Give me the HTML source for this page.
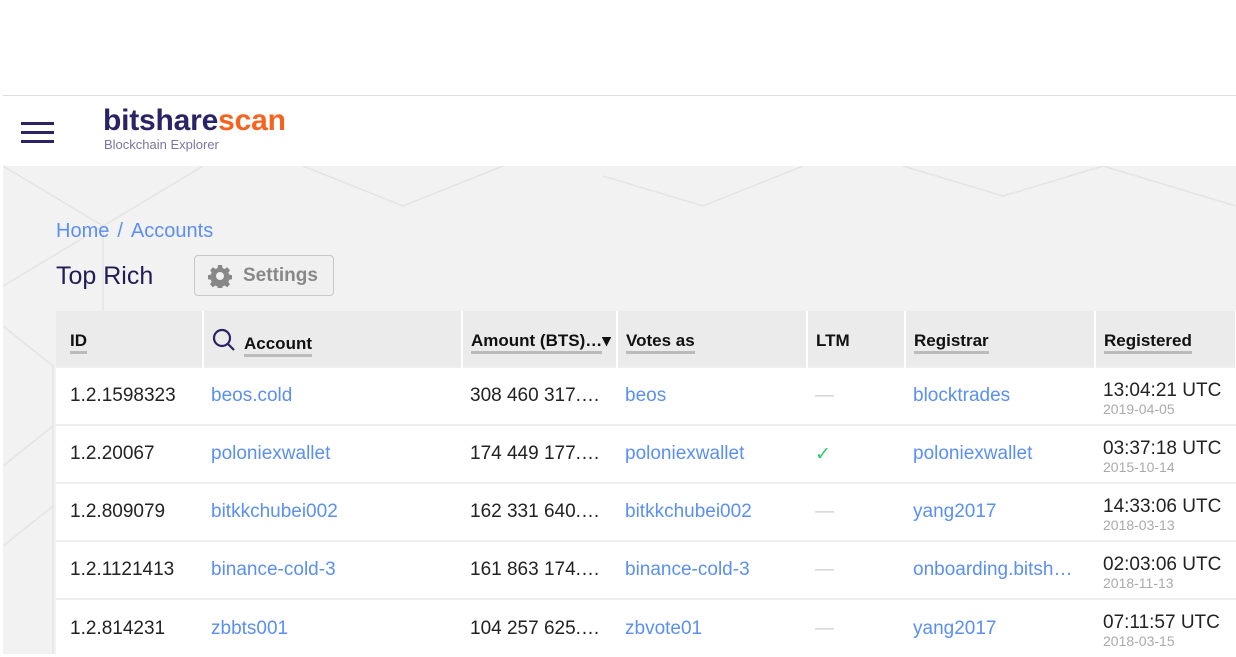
<!DOCTYPE html>
<html><head><meta charset="utf-8"><style>
*{margin:0;padding:0;box-sizing:border-box}
body{width:1236px;height:654px;overflow:hidden;background:#fff;font-family:"Liberation Sans",sans-serif;position:relative}
.topline{position:absolute;left:3px;right:0;top:95px;height:1px;background:#ddd}
.hdr{position:absolute;left:3px;right:0;top:96px;height:70px;background:#fff}
.ham{position:absolute;left:21px;top:122px;width:33px}
.ham i{display:block;height:3px;background:#2a2466;margin-bottom:6px}
.logo{position:absolute;left:103px;top:104px;font-size:30px;font-weight:bold;color:#2a2466;letter-spacing:-0.2px}
.logo span{color:#f7631e}
.sub{position:absolute;left:104px;top:137px;font-size:13px;color:#7a76a0}
.bg{position:absolute;left:3px;right:0;top:166px;bottom:0;background:#f2f2f2}
.crumb{position:absolute;left:56px;top:220px;font-size:20px;color:#5b8ff0}
.crumb b{font-weight:normal;color:#5b8ff0;margin:0 8px}
h1{position:absolute;left:56px;top:262px;font-size:25px;font-weight:normal;color:#231d55}
.btn{position:absolute;left:194px;top:255px;width:140px;height:41px;border:1px solid #c8c8c8;border-radius:4px;background:#f0f0f0;color:#888;font-size:19px;font-weight:bold;padding:9px 0 0 48px}
.btn svg{position:absolute;left:13px;top:8px}
table{position:absolute;left:56px;top:311px;width:1180px;border-collapse:collapse;font-size:19px;table-layout:fixed}
th{background:#ebebeb;height:56px;text-align:left;padding:4px 0 0 14px;font-size:17px;color:#111;border-right:2px solid #fff;white-space:nowrap;overflow:hidden}
th:first-child{padding-left:14px}
th u{text-decoration:none;border-bottom:3px solid #bbb;padding-bottom:1px}
td{background:#fff;height:58px;padding:0 0 0 14px;border-top:2px solid #eee;white-space:nowrap;color:#222;overflow:hidden;text-overflow:ellipsis}
td:nth-child(2),th:nth-child(2){padding-left:8px}
td a{color:#5b8ff0}
.d{color:#ccc}
.t{line-height:22px;padding-top:4px;padding-left:8px}
th:last-child{padding-left:8px}
.t small{display:block;font-size:14px;color:#aaa;line-height:15px}
</style></head><body>
<div class="topline"></div>
<div class="hdr"></div>
<div class="ham"><i></i><i></i><i></i></div>
<div class="logo">bitshare<span>scan</span></div>
<div class="sub">Blockchain Explorer</div>
<div class="bg">
<svg width="1233" height="488" style="position:absolute;left:0;top:0" stroke="#e4e4e4" fill="none" stroke-width="1.5">
<path d="M0 0L100 60L200 0M100 60V160M0 120L100 60M300 0L400 40L500 0M600 10L700 40L800 0M900 0L1000 30L1100 0L1233 40M0 160L50 200V488M0 300L50 260M0 380L50 340"/>
</svg></div>
<div class="crumb">Home<b>/</b>Accounts</div>
<h1>Top Rich</h1>
<div class="btn"><svg width="24" height="24" viewBox="0 0 24 24"><path fill="#888" d="M10 1h4l.6 3 2 1 2.6-1.7 2.8 2.8L20.3 8.6l1 2 3 .6v4l-3 .6-1 2 1.7 2.6-2.8 2.8-2.6-1.7-2 1-.6 3h-4l-.6-3-2-1-2.6 1.7-2.8-2.8 1.7-2.6-1-2-3-.6v-4l3-.6 1-2L2.2 6.1 5 3.3l2.6 1.7 2-1zM12 8a4 4 0 100 8 4 4 0 000-8z"/></svg>Settings</div>
<table>
<colgroup><col style="width:147px"><col style="width:259px"><col style="width:155px"><col style="width:190px"><col style="width:98px"><col style="width:190px"><col style="width:141px"></colgroup>
<tr><th><u>ID</u></th><th><svg width="24" height="24" viewBox="0 0 24 24" style="vertical-align:-3px;margin-right:8px" stroke="#2a2466" stroke-width="2.2" fill="none"><circle cx="10" cy="10" r="8"/><path d="M16 16l6 6"/></svg><u>Account</u></th><th style="padding-left:8px"><u>Amount (BTS)…</u>▾</th><th style="padding-left:8px"><u>Votes as</u></th><th style="padding-left:8px">LTM</th><th style="padding-left:8px"><u>Registrar</u></th><th><u>Registered</u></th></tr>
<tr><td>1.2.1598323</td><td><a>beos.cold</a></td><td style="padding-left:8px">308 460 317.…</td><td style="padding-left:8px"><a>beos</a></td><td class="d" style="padding-left:8px">—</td><td style="padding-left:8px"><a>blocktrades</a></td><td class="t">13:04:21 UTC<small>2019-04-05</small></td></tr>
<tr><td>1.2.20067</td><td><a>poloniexwallet</a></td><td style="padding-left:8px">174 449 177.…</td><td style="padding-left:8px"><a>poloniexwallet</a></td><td style="color:#2ecc71;padding-left:8px">✓</td><td style="padding-left:8px"><a>poloniexwallet</a></td><td class="t">03:37:18 UTC<small>2015-10-14</small></td></tr>
<tr><td>1.2.809079</td><td><a>bitkkchubei002</a></td><td style="padding-left:8px">162 331 640.…</td><td style="padding-left:8px"><a>bitkkchubei002</a></td><td class="d" style="padding-left:8px">—</td><td style="padding-left:8px"><a>yang2017</a></td><td class="t">14:33:06 UTC<small>2018-03-13</small></td></tr>
<tr><td>1.2.1121413</td><td><a>binance-cold-3</a></td><td style="padding-left:8px">161 863 174.…</td><td style="padding-left:8px"><a>binance-cold-3</a></td><td class="d" style="padding-left:8px">—</td><td style="padding-left:8px"><a>onboarding.bitsh…</a></td><td class="t">02:03:06 UTC<small>2018-11-13</small></td></tr>
<tr><td>1.2.814231</td><td><a>zbbts001</a></td><td style="padding-left:8px">104 257 625.…</td><td style="padding-left:8px"><a>zbvote01</a></td><td class="d" style="padding-left:8px">—</td><td style="padding-left:8px"><a>yang2017</a></td><td class="t">07:11:57 UTC<small>2018-03-15</small></td></tr>
</table>
</body></html>
